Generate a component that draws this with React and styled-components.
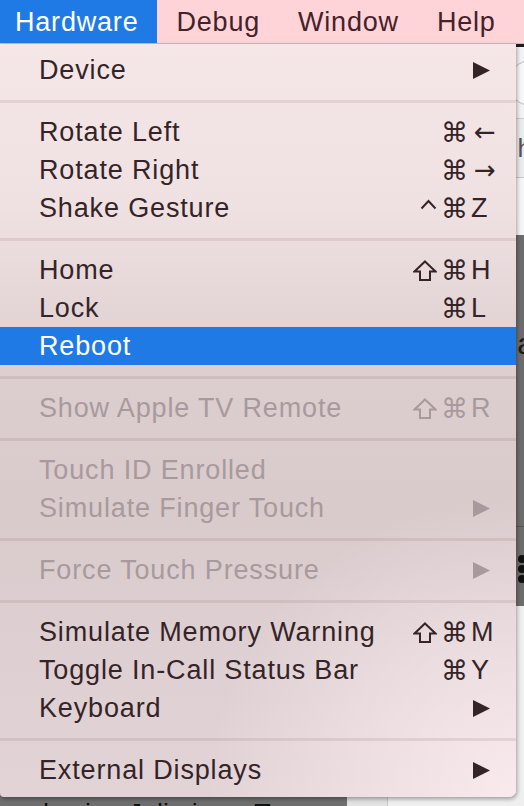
import React from 'react';
import styled, { createGlobalStyle } from 'styled-components';

// STYLE
const GlobalStyle = createGlobalStyle`
  html, body {
    margin: 0;
    padding: 0;
    background: #efefef;
  }
  body {
    font-family: 'Liberation Sans', Arial, sans-serif;
  }
`;

const Page = styled.div`
  width: 524px;
  height: 806px;
  overflow: hidden;
  display: flex;
  flex-direction: column;
`;

const MenuBar = styled.div`
  height: 43px;
  flex: none;
  display: flex;
  background: #ffd4d8;
  border-bottom: 1px solid #c9bebf;
`;

const BarItem = styled.div`
  padding: 1px 19px 0 ${p => (p.$first ? '15px' : '19px')};
  line-height: 42px;
  font-size: 27px;
  letter-spacing: 0.8px;
  color: ${p => (p.$active ? '#fff' : '#45222a')};
  background: ${p => (p.$active ? '#1f7ae5' : 'transparent')};
`;

const Desktop = styled.div`
  position: relative;
  flex: 1;
  display: flex;
  flex-direction: column;
`;

// the window behind the menu
const EdgeLine = styled.div`
  height: 3px;
  background: #1d1d1d;
`;

const Toolbar = styled.div`
  height: 71px;
  background: #f3f3f3;
  border-bottom: 1px solid #cdcdcd;
  display: flex;
  justify-content: flex-end;
  align-items: center;
`;

const RoundButton = styled.div`
  width: 44px;
  height: 44px;
  margin-right: -30px;
  border: 1px solid #b9b9b9;
  border-radius: 50%;
  background: #f7f7f7;
`;

const TabRow = styled.div`
  height: 58px;
  background: #ebebeb;
  border-bottom: 1px solid #c6c6c6;
  display: flex;
  justify-content: flex-end;
  align-items: center;
  font-size: 26px;
  color: #555;
`;

const Clip = styled.span`
  margin-right: -8px;
`;

const LightBand = styled.div`
  height: 57px;
  background: #f5f5f5;
`;

const DarkPanel = styled.div`
  height: 371px;
  background: #6d6d6d;
  display: flex;
  flex-direction: column;
  align-items: flex-end;
`;

const DarkText = styled.div`
  margin-top: 92px;
  margin-right: -10px;
  font-size: 30px;
  color: #1a1a1a;
`;

const DarkRule = styled.div`
  align-self: stretch;
  margin-top: 165px;
  height: 1px;
  background: #555;
`;

const Dots = styled.div`
  margin-top: 28px;
  display: flex;
  flex-direction: column;
  gap: 2px;
`;

const Dot = styled.span`
  width: 8px;
  height: 8px;
  border-radius: 50%;
  background: #111;
  margin-right: -2px;
`;

const LowerArea = styled.div`
  flex: 1;
  display: flex;
`;

const CodeColumn = styled.div`
  width: 347px;
  background: #6f6f6f;
  display: flex;
  align-items: flex-end;
  overflow: hidden;
`;

const CodeLine = styled.div`
  margin: 0 0 -24px 4px;
  font-size: 27px;
  color: #111;
  white-space: nowrap;
`;

const SideColumn = styled.div`
  width: 40px;
  background: #e2e2e2;
  border-right: 1px solid #c8c8c8;
`;

const RestColumn = styled.div`
  flex: 1;
  background: #efefef;
`;

// the menu
const Dropdown = styled.div`
  position: absolute;
  top: 0;
  left: 0;
  width: 516px;
  padding: 7px 0 8px;
  border-radius: 0 0 7px 4px;
  background:
    radial-gradient(ellipse 60% 40% at 100% 100%, rgba(250, 236, 240, 0.9), rgba(250, 236, 240, 0) 100%),
    linear-gradient(180deg, #f5e7e8 0%, #efe1e2 22%, #dccdcf 45%, #d9cacc 62%, #ded0d2 80%, #e2d4d6 100%);
  box-shadow: 1px 2px 4px rgba(0, 0, 0, 0.35);
  color: #382629;
`;

const Separator = styled.div`
  height: 3px;
  margin: 11px 0 10px;
  background: rgba(120, 80, 86, 0.13);
`;

const Row = styled.div`
  height: 38px;
  display: grid;
  grid-template-columns: 1fr auto 27px;
  align-items: center;
  padding: 0 19px 0 39px;
  background: ${p => (p.$selected ? '#1f7ae5' : 'transparent')};
  color: ${p => (p.$selected ? '#fff' : p.$disabled ? '#a89a9c' : '#352427')};
`;

const Label = styled.span`
  font-size: 27px;
  letter-spacing: 0.85px;
  white-space: nowrap;
`;

const Mods = styled.span`
  display: flex;
  align-items: center;
  justify-content: flex-end;
  gap: 4px;
  margin-right: 2px;
  font-family: 'DejaVu Sans', sans-serif;
  font-size: 27px;
  line-height: 1;
`;

const Glyph = styled.svg`
  width: ${p => p.$w}px;
  height: 21px;
  fill: none;
  stroke: currentColor;
  stroke-width: 2;
`;

const Key = styled.span`
  font-family: ${p => (p.$arrow ? "'DejaVu Sans', sans-serif" : "'Liberation Sans', Arial, sans-serif")};
  font-size: ${p => (p.$arrow ? '26px' : '27px')};
  line-height: 1;
  margin-left: ${p => (p.$arrow ? '4px' : '1px')};
`;

const Arrow = styled.svg`
  width: 17px;
  height: 17px;
  margin-left: 3px;
  fill: currentColor;
`;

const sections = [
  [{ label: 'Device', submenu: true }],
  [
    { label: 'Rotate Left', mods: ['⌘'], key: '←', arrow: true },
    { label: 'Rotate Right', mods: ['⌘'], key: '→', arrow: true },
    { label: 'Shake Gesture', mods: ['control', '⌘'], key: 'Z' }
  ],
  [
    { label: 'Home', mods: ['shift', '⌘'], key: 'H' },
    { label: 'Lock', mods: ['⌘'], key: 'L' },
    { label: 'Reboot', selected: true }
  ],
  [{ label: 'Show Apple TV Remote', mods: ['shift', '⌘'], key: 'R', disabled: true }],
  [
    { label: 'Touch ID Enrolled', disabled: true },
    { label: 'Simulate Finger Touch', disabled: true, submenu: true }
  ],
  [{ label: 'Force Touch Pressure', disabled: true, submenu: true }],
  [
    { label: 'Simulate Memory Warning', mods: ['shift', '⌘'], key: 'M' },
    { label: 'Toggle In-Call Status Bar', mods: ['⌘'], key: 'Y' },
    { label: 'Keyboard', submenu: true }
  ],
  [{ label: 'External Displays', submenu: true }]
];

function Modifier({ name }) {
  if (name === 'shift') {
    return (
      <Glyph $w={24} viewBox="0 0 24 21">
        <path d="M12 1.5 L22.5 11.5 L17 11.5 L17 20 L7 20 L7 11.5 L1.5 11.5 Z" />
      </Glyph>
    );
  }
  if (name === 'control') {
    return (
      <Glyph $w={17} viewBox="0 0 17 21">
        <polyline points="1.5,10.5 8.5,3 15.5,10.5" />
      </Glyph>
    );
  }
  return <span>{name}</span>;
}

function MenuRow({ item }) {
  return (
    <Row $selected={item.selected} $disabled={item.disabled}>
      <Label>{item.label}</Label>
      <Mods>
        {(item.mods || []).map(m => (
          <Modifier key={m} name={m} />
        ))}
      </Mods>
      {item.submenu ? (
        <Arrow viewBox="0 0 17 17">
          <polygon points="0,0 17,8.5 0,17" />
        </Arrow>
      ) : (
        <Key $arrow={item.arrow}>{item.key || ''}</Key>
      )}
    </Row>
  );
}

const App = () => {
  return (
    <Page>
      <GlobalStyle />
      <MenuBar>
        <BarItem $first $active>Hardware</BarItem>
        <BarItem>Debug</BarItem>
        <BarItem>Window</BarItem>
        <BarItem>Help</BarItem>
      </MenuBar>
      <Desktop>
        <EdgeLine />
        <Toolbar>
          <RoundButton />
        </Toolbar>
        <TabRow>
          <Clip>h</Clip>
        </TabRow>
        <LightBand />
        <DarkPanel>
          <DarkText>a</DarkText>
          <DarkRule />
          <Dots>
            <Dot />
            <Dot />
            <Dot />
          </Dots>
        </DarkPanel>
        <LowerArea>
          <CodeColumn>
            <CodeLine>and using Julia is as T</CodeLine>
          </CodeColumn>
          <SideColumn />
          <RestColumn />
        </LowerArea>
        <Dropdown>
          {sections.map((section, i) => (
            <React.Fragment key={i}>
              {i > 0 && <Separator />}
              {section.map(item => (
                <MenuRow key={item.label} item={item} />
              ))}
            </React.Fragment>
          ))}
        </Dropdown>
      </Desktop>
    </Page>
  );
};

export default App;
